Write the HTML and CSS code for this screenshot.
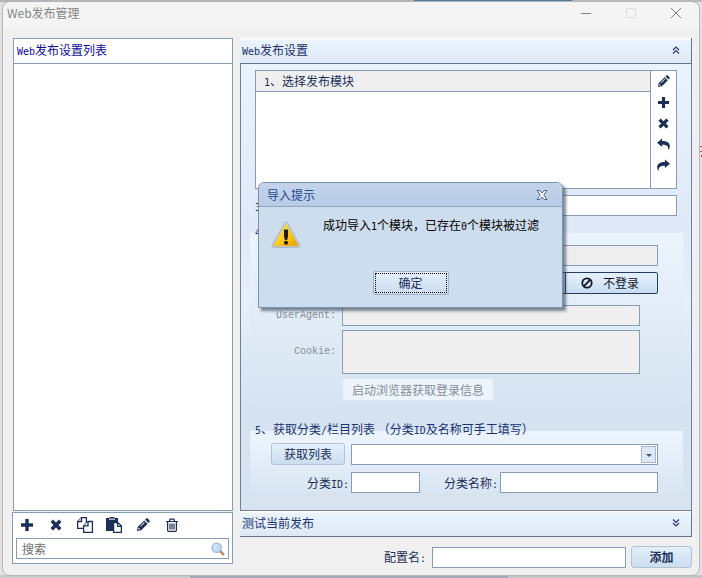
FILE: index.html
```html
<!DOCTYPE html>
<html lang="zh-CN">
<head>
<meta charset="utf-8">
<title>Web发布管理</title>
<link rel="stylesheet" href="styles.css">
</head>
<body>
<svg class="defs" aria-hidden="true">
  <symbol id="pencil" viewBox="0 0 14 14"><path fill="currentColor" fill-rule="evenodd" d="M1 13l.8-4.2L8.2 2.400l3.400 3.400L5.200 12.200zM9.100 1.600l1-1c.5-.5 1.100-.5 1.600 0l1.700 1.700c.5.5.5 1.100 0 1.600l-1 1zM2.600 9.600l-.3 2 2-.3zM4.200 8l.6.6 3.900-3.900-.6-.6z"/></symbol>
  <symbol id="plus" viewBox="0 0 14 14"><path fill="currentColor" d="M5.300 1h3.400v4.300H13v3.400H8.700V13H5.300V8.700H1V5.300h4.300z"/></symbol>
  <symbol id="cross" viewBox="0 0 14 14"><path fill="currentColor" d="M4 1.500l3 3 3-3L12.500 4l-3 3 3 3-2.500 2.500-3-3-3 3L1.500 10l3-3-3-3z"/></symbol>
  <symbol id="undo" viewBox="0 0 14 14"><path fill="currentColor" d="M0 5l5.500-4.500v2.700C10.500 3.200 13.800 5 13.800 9c0 1.800-.6 3-1.800 4.200.8-4-1.500-5.900-6.500-5.900v2.500z"/></symbol>
  <symbol id="redo" viewBox="0 0 14 14"><path fill="currentColor" d="M14 5L8.500.5v2.700C3.500 3.200.2 5 .2 9c0 1.800.6 3 1.800 4.200-.8-4 1.500-5.900 6.500-5.900v2.500z"/></symbol>
</svg>
<div class="window">
  <header class="titlebar">
    <h1>Web发布管理</h1>
    <div class="controls">
      <button type="button" aria-label="最小化"><svg viewBox="0 0 12 12"><path d="M1 6.500h10"/></svg></button>
      <button type="button" aria-label="最大化" disabled><svg viewBox="0 0 12 12"><rect x="1.500" y="1.500" width="9" height="9" rx="1"/></svg></button>
      <button type="button" aria-label="关闭"><svg viewBox="0 0 12 12"><path d="M1 1l10 10M11 1L1 11"/></svg></button>
    </div>
  </header>

  <div class="columns">
    <aside class="side">
      <section class="list">
        <h2><span class="latin">Web</span>发布设置列表</h2>
      </section>
      <div class="side-tools">
        <div class="tool-row">
          <button type="button" aria-label="新增"><svg viewBox="0 0 14 14"><use href="#plus"/></svg></button>
          <button type="button" aria-label="移除"><svg viewBox="0 0 14 14"><use href="#cross"/></svg></button>
          <button type="button" aria-label="复制"><svg class="wide" viewBox="0 0 18 18"><g fill="#fff" stroke="currentColor" stroke-width="1.300"><path d="M5.500 1.600h4.900v10.800H1.600V5.500z"/><path d="M5.500 1.600v3.900H1.600" /><path d="M12 5.500h4.400v10.900H7.600V9.900z"/><path d="M12 5.500v4.400H7.600"/></g></svg></button>
          <button type="button" aria-label="粘贴"><svg class="wide" viewBox="0 0 18 18"><path fill="currentColor" d="M1 2h3.500V1h5v1H13v4H8v9H1z"/><path fill="#fff" d="M4 2.600h6v1H4z"/><path fill="#fff" stroke="currentColor" stroke-width="1.300" d="M8.600 6.600h4.400l3.400 3.400v6.400H8.600zM12.600 6.600v3.800h3.800"/></svg></button>
          <button type="button" aria-label="编辑"><svg viewBox="0 0 14 14"><use href="#pencil"/></svg></button>
          <button type="button" aria-label="删除"><svg viewBox="0 0 14 14"><path fill="none" stroke="currentColor" stroke-width="1.200" d="M1 3.500h12M4.500 3.500L5 1.200h4l.5 2.300M2.600 3.500v8.800c0 .7.400 1.100 1 1.100h6.800c.6 0 1-.4 1-1.100V3.500M5 5.500v6M7 5.500v6M9 5.500v6"/></svg></button>
        </div>
        <div class="search">
          <input type="text" placeholder="搜索" aria-label="搜索">
          <svg viewBox="0 0 14 14"><path stroke="#c98b55" stroke-width="2.600" stroke-linecap="round" d="M9.500 9.500l2.800 2.800"/><circle cx="5.700" cy="5.700" r="4.600" fill="#c5dcf8" stroke="#9fb4d6" stroke-width="1.300"/><path fill="none" stroke="#eef6ff" stroke-width="1.300" d="M3.300 5.500c.2-1.300 1-2.100 2.300-2.300"/></svg>
        </div>
      </div>
    </aside>

    <main class="main">
      <button type="button" class="bar"><span><span class="latin">Web</span>发布设置</span>
        <svg viewBox="0 0 8 8"><path d="M1 4l3-3 3 3M1 7.500l3-3 3 3"/></svg></button>
      <form class="body">
        <div class="modules">
          <div class="module-list"><h3><span class="latin">1</span>、选择发布模块</h3></div>
          <div class="module-tools">
            <button type="button" aria-label="编辑模块"><svg viewBox="0 0 14 14"><use href="#pencil"/></svg></button>
            <button type="button" aria-label="添加模块"><svg viewBox="0 0 14 14"><use href="#plus"/></svg></button>
            <button type="button" aria-label="移除模块"><svg viewBox="0 0 14 14"><use href="#cross"/></svg></button>
            <button type="button" aria-label="导入模块"><svg viewBox="0 0 14 14"><use href="#undo"/></svg></button>
            <button type="button" aria-label="导出模块"><svg viewBox="0 0 14 14"><use href="#redo"/></svg></button>
          </div>
        </div>
        <div class="row address"><label for="address"><span class="latin">3</span></label><input id="address" type="text"></div>
        <fieldset class="group login">
          <legend><span class="latin">4</span></legend>
          <div class="row"><span class="label"></span><input type="text" aria-label="登录" disabled></div>
          <div class="row mode"><span class="label"></span><button type="button" class="no-login"><svg viewBox="0 0 12 12"><circle cx="6" cy="6" r="4.700"/><path d="M2.700 9.300l6.600-6.600"/></svg>不登录</button></div>
          <div class="row narrow"><label class="label mono" for="agent">UserAgent:</label><input id="agent" type="text" disabled></div>
          <div class="row narrow cookie"><label class="label mono" for="cookie">Cookie:</label><textarea id="cookie" disabled></textarea></div>
          <div class="row narrow"><span class="label"></span><button type="button" class="browser" disabled>启动浏览器获取登录信息</button></div>
        </fieldset>
        <fieldset class="group category">
          <legend><span class="latin">5</span>、获取分类<span class="latin">/</span>栏目列表 （分类<span class="latin">ID</span>及名称可手工填写）</legend>
          <div class="row"><button type="button" class="fetch">获取列表</button>
            <div class="select"><select aria-label="栏目列表"></select><span class="arrow"></span></div></div>
          <div class="row second"><label for="cid" class="id-label">分类<span class="latin">ID:</span></label><input id="cid" class="cid" type="text"><label for="cname" class="name-label">分类名称<span class="latin">:</span></label><input id="cname" type="text"></div>
        </fieldset>
      </form>
      <button type="button" class="bar"><span>测试当前发布</span>
        <svg viewBox="0 0 8 8"><path d="M1 .5l3 3 3-3M1 4l3 3 3-3"/></svg></button>
      <footer class="footer">
        <label for="config">配置名<span class="latin">:</span></label><input id="config" type="text"><button type="button" class="add">添加</button>
      </footer>
    </main>
  </div>
</div>

<section class="dialog" role="dialog" aria-labelledby="dialog-title">
  <header><h2 id="dialog-title">导入提示</h2>
    <button type="button" aria-label="关闭提示"><svg viewBox="0 0 12 12"><path fill="#f5f9ff" stroke="#51658a" d="M1 1.500h3l2 2.500 2-2.500h3L7.800 6l3.200 4.500H8L6 8l-2 2.500H1L4.200 6z"/></svg></button></header>
  <div class="message">
    <svg viewBox="0 0 32 30"><defs><linearGradient id="amber" x1="0" y1="0" x2="1" y2="1"><stop offset="0" stop-color="#fff27a"/><stop offset=".5" stop-color="#ffd21c"/><stop offset="1" stop-color="#f09a00"/></linearGradient></defs><path fill="#dfe4e8" stroke="#98a2ad" stroke-linejoin="round" d="M16 1.500c.8 0 1.300.4 1.700 1.100L30.600 26c.6 1.200 0 2-1.200 2H2.600c-1.200 0-1.800-.8-1.200-2L14.300 2.600c.4-.7.9-1.100 1.700-1.100z"/><path fill="url(#amber)" stroke="#d9a300" stroke-width=".6" d="M16 3.300L29.200 26.500H2.800z"/><path fill="#201c10" d="M13.800 9h4.400v7l-1 4.300h-2.400l-1-4.300z"/><circle cx="16" cy="23.300" r="2.200" fill="#201c10"/></svg>
    <p>成功导入<span class="latin">1</span>个模块，已存在<span class="latin">0</span>个模块被过滤</p>
  </div>
  <div class="actions"><button type="button"><span>确定</span></button></div>
</section>
</body>
</html>
```
FILE: styles.css
```css
* {
  box-sizing: border-box;
}

:root {
  --line: #869cb8;
  --ink: #1b2f57;
  --navy: #203070;
}

body {
  margin: 0;
  min-height: 100vh;
  padding: 1px 2px 2px;
  display: flex;
  position: relative;
  overflow: hidden;
  color: var(--ink);
  font: 12px/16px "Noto Sans CJK SC", sans-serif;
  background:
    linear-gradient(90deg, #b5b5b7 0 414px, #507c9b 414px 572px, #b5b7b9 572px) top / 100% 2px no-repeat,
    linear-gradient(90deg, #c8cacc 0 190px, #a2abb7 190px 508px, #c2c4c6 508px) bottom / 100% 3px no-repeat,
    linear-gradient(#d5483f, #d5483f) 100% 146px / 2px 1px no-repeat,
    linear-gradient(#d5483f, #d5483f) 100% 151px / 2px 1px no-repeat,
    linear-gradient(#d5483f, #d5483f) 100% 155px / 1px 2px no-repeat,
    #e2e2e2;
}

h1, h2, h3, p {
  margin: 0;
  font-size: 12px;
  font-weight: 400;
}

button, input, textarea, select {
  margin: 0;
  padding: 0;
  border: 0;
  border-radius: 0;
  background: none;
  color: inherit;
  font: inherit;
}

button {
  display: flex;
  align-items: center;
  justify-content: center;
}

svg {
  display: block;
}

input, textarea, select {
  min-width: 0;
  height: 21px;
  padding: 0 5px;
  border: 1px solid var(--line);
  background: #fff;
}

input:disabled, textarea:disabled {
  background: #efefef;
}

.defs {
  position: absolute;
  width: 0;
  height: 0;
}

.latin {
  font-family: "DejaVu Sans Mono", monospace;
  font-size: 10px;
  line-height: 10px;
}

.mono {
  font-family: "Liberation Mono", monospace;
  font-size: 10px;
}

.window {
  flex: 1;
  display: flex;
  flex-direction: column;
  border: 1px solid #b4b6b9;
  border-radius: 8px;
  background: linear-gradient(#f4f4f4 0 24px, #f0f0f0 28px);
}

.titlebar {
  display: flex;
  align-items: flex-start;
  justify-content: space-between;
  height: 36px;
  padding: 3px 17px 0 4px;
  color: #858585;
}

.controls {
  display: flex;
  gap: 33px;
  padding-top: 2px;
}

.controls svg {
  width: 12px;
  height: 12px;
  fill: none;
  stroke: #808080;
}

.controls button:disabled svg {
  stroke: #dcdcdc;
}

.columns {
  flex: 1;
  display: flex;
  gap: 7px;
  padding: 0 7px 7px 9px;
}

.side {
  flex: 0 0 221px;
  display: flex;
  flex-direction: column;
  gap: 1px;
  margin-bottom: 4px;
}

.list {
  flex: 1;
  margin-left: 1px;
  border: 1px solid var(--line);
  background: #fff;
}

.list h2 {
  height: 25px;
  padding: 3px;
  border-bottom: 1px solid var(--line);
  color: #0b0b9c;
}

.side-tools {
  padding: 4px 3px;
  border: 1px solid var(--line);
  background: #fff;
}

.tool-row {
  display: flex;
  align-items: center;
  gap: 13px;
  height: 16px;
  margin: 0 0 5px 3px;
}

.tool-row button {
  width: 16px;
}

.tool-row svg {
  width: 14px;
  height: 14px;
}

.tool-row .wide {
  flex: none;
  width: 18px;
  height: 18px;
}

.search {
  display: flex;
  align-items: center;
  height: 21px;
  border: 1px solid var(--line);
}

.search input {
  flex: 1;
  height: 100%;
  border: 0;
}

.search input::placeholder {
  color: #6d6d6d;
}

.search svg {
  width: 14px;
  height: 14px;
  margin-right: 3px;
}

.main {
  flex: 1;
  min-width: 0;
  display: flex;
  flex-direction: column;
}

.bar {
  justify-content: space-between;
  height: 26px;
  padding: 0 11px 1px 2px;
  border-right: 1px solid #65748a;
  border-bottom: 1px solid #65748a;
  background: linear-gradient(#fff 0 1px, #ebf4fd 2px, #dce8f4);
  color: var(--navy);
}

.bar svg {
  width: 8px;
  height: 8px;
  fill: none;
  stroke: #273a7c;
  stroke-width: 1.2;
}

.body {
  flex: 1;
  padding: 6px 8px 13px 9px;
  border: 1px solid #718096;
  border-top: 0;
  background: linear-gradient(#e8f3fe, #e0e9f7 160px, #e6eefb 240px, #d5e3f0 350px, #d8e3ef);
}

.modules {
  display: flex;
  height: 119px;
  margin: 0 6px 6px 5px;
  border: 1px solid var(--line);
  background: #fff;
}

.module-list {
  flex: 1;
}

.module-list h3 {
  height: 21px;
  padding: 2px 8px;
  border-bottom: 1px solid var(--line);
  background: #efefef;
}

.module-tools {
  display: flex;
  flex-direction: column;
  align-items: center;
  gap: 8px;
  width: 26px;
  padding-top: 4px;
  border-left: 1px solid var(--line);
}

.module-tools svg {
  width: 13px;
  height: 13px;
}

.row {
  display: flex;
  align-items: center;
}

.row > input, .row > textarea {
  flex: 1;
}

.address {
  gap: 81px;
  margin: 0 6px 0 5px;
}

.group {
  min-width: 0;
  margin: 0;
  padding: 0 25px 0 0;
  border: 0;
  border-radius: 4px;
}

.group legend {
  float: left;
  width: 100%;
  height: 16px;
  margin-bottom: 6px;
  padding: 0 5px;
  color: var(--navy);
}

.group .row {
  clear: both;
}

.login {
  padding-top: 7px;
  background: linear-gradient(transparent 17px, #ecf4fd 17px, #d7e4f1);
}

.login .label {
  flex: 0 0 86px;
  margin-right: 6px;
  text-align: right;
  color: #878e97;
}

.login .mode {
  margin: 6px 0 11px;
}

.no-login {
  flex: 1;
  gap: 10px;
  height: 22px;
  padding-left: 220px;
  border: 1px solid #243d63;
  border-radius: 2px;
  background: linear-gradient(90deg, transparent 222px, #243d63 222px 223px, transparent 223px), linear-gradient(#e7f1fc, #c9dcf1);
  color: #101828;
}

.no-login svg {
  width: 12px;
  height: 12px;
  fill: none;
  stroke: currentColor;
  stroke-width: 1.8;
}

.narrow {
  padding-right: 18px;
}

.cookie {
  margin: 4px 0;
}

.cookie textarea {
  height: 44px;
  resize: none;
}

.browser {
  height: 23px;
  padding: 0 9px;
  border: 1px solid #dce5ee;
  border-radius: 2px;
  background: #ecf4fd;
  color: #878e97;
}

.category {
  padding-top: 20px;
  background: linear-gradient(transparent 30px, #ecf5ff 30px, #d9e5f2);
}

.fetch, .add {
  height: 22px;
  border: 1px solid #b2c2d4;
  border-radius: 3px;
  background: linear-gradient(#e3effb, #ccddef);
}

.fetch {
  width: 74px;
  margin: 0 6px 0 21px;
}

.select {
  position: relative;
  flex: 1;
  display: flex;
}

.select select {
  flex: 1;
  appearance: none;
}

.arrow {
  position: absolute;
  top: 2px;
  right: 2px;
  bottom: 2px;
  width: 15px;
  border: 1px solid #a8b9cc;
  background: #dce8f5;
  pointer-events: none;
}

.arrow::after {
  content: "";
  position: absolute;
  top: 7px;
  left: 4px;
  border: 3px solid transparent;
  border-top-color: #44566e;
  border-bottom: 0;
}

.second {
  margin-top: 7px;
}

.id-label {
  flex: 0 0 99px;
  margin-right: 2px;
  text-align: right;
}

.row > .cid {
  flex: 0 0 69px;
}

.name-label {
  flex: 0 0 78px;
  margin-right: 2px;
  text-align: right;
}

.footer {
  display: flex;
  align-items: center;
  margin-top: 9px;
  padding-left: 144px;
}

.footer input {
  flex: 1;
  margin: 0 5px 0 6px;
}

.add {
  width: 61px;
  font-weight: 700;
}

.dialog {
  position: absolute;
  top: 182px;
  left: 258px;
  width: 305px;
  border: 1px solid #7e92ae;
  border-radius: 6px 6px 0 0;
  background: #cddded;
  box-shadow: 3px 3px 3px rgba(60, 75, 95, .65);
}

.dialog header {
  display: flex;
  align-items: center;
  justify-content: space-between;
  height: 24px;
  padding: 0 14px 0 8px;
  border-bottom: 1px solid #91a6c0;
  border-radius: 5px 5px 0 0;
  background: linear-gradient(#c3d3ea, #b9cce6);
  color: #2a4690;
}

.dialog header svg {
  width: 12px;
  height: 12px;
}

.message {
  display: flex;
  gap: 22px;
  padding: 10px 12px 0;
  color: #000;
}

.message svg {
  flex: none;
  width: 30px;
  height: 28px;
  margin-top: 4px;
}

.actions {
  display: flex;
  justify-content: center;
  padding: 22px 0 12px;
}

.actions button {
  width: 76px;
  height: 24px;
  padding: 1px;
  border: 1px solid #a3b4c8;
  border-radius: 2px;
  background: linear-gradient(#e4effb, #cbdcef);
}

.actions span {
  flex: 1;
  height: 20px;
  border: 1px dotted #000;
  line-height: 18px;
}
```
